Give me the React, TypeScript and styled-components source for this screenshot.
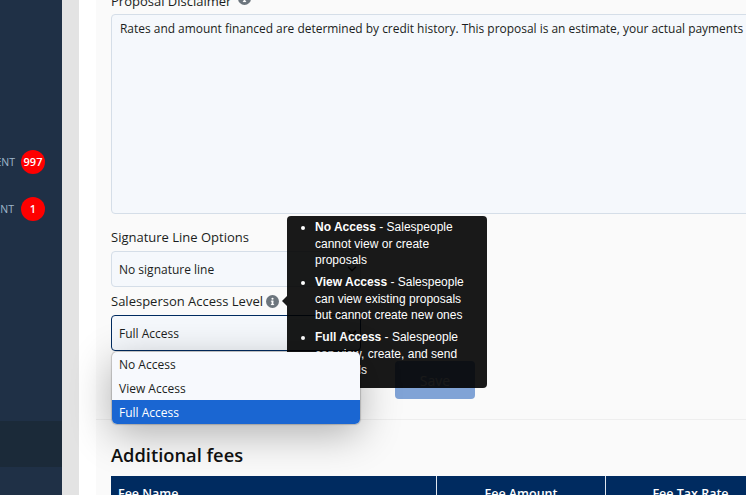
import styled, { createGlobalStyle } from "styled-components";
import { ChevronDown } from "lucide-react";

const GlobalStyle = createGlobalStyle`
  html, body {
    margin: 0;
    padding: 0;
    width: 746px;
    height: 495px;
    overflow: hidden;
    background: #fafafa;
  }
  * {
    box-sizing: border-box;
  }
`;

const InfoIcon = ({ size = 13 }: { size?: number }) => (
  <svg width={size} height={size} viewBox="0 0 16 16">
    <circle cx="8" cy="8" r="8" fill="#6c757d" />
    <rect x="6.9" y="7" width="2.2" height="5" fill="#fff" />
    <rect x="6" y="7" width="3" height="1.2" fill="#fff" />
    <rect x="6" y="11.2" width="4" height="1.2" fill="#fff" />
    <circle cx="8" cy="4.6" r="1.3" fill="#fff" />
  </svg>
);

const disclaimer =
  "Rates and amount financed are determined by credit history. This proposal is an estimate, your actual payments may vary.";

const App = () => {
  return (
    <Page>
      <GlobalStyle />
      <Sidebar>
        <NavRow>
          <NavText>ADJUSTMENT</NavText>
          <Badge>997</Badge>
        </NavRow>
        <NavRow $gap={7}>
          <NavText>PAYMENT</NavText>
          <Badge>1</Badge>
        </NavRow>
        <ActiveRow />
      </Sidebar>
      <Gutter />
      <WhiteStrip />
      <Content>
        <Form>
          <LabelRow>
            Proposal Disclaimer
            <DisclaimerIcon>
              <InfoIcon />
            </DisclaimerIcon>
          </LabelRow>
          <TextArea>{disclaimer}</TextArea>
          <SignatureLabel>Signature Line Options</SignatureLabel>
          <SelectBox>
            No signature line
            <Chevron>
              <ChevronDown size={14} strokeWidth={2.5} />
            </Chevron>
          </SelectBox>
          <AccessLabel>
            Salesperson Access Level
            <AccessIcon>
              <InfoIcon />
            </AccessIcon>
            <Tooltip>
              <TooltipArrow />
              <TooltipList>
                <TooltipItem>
                  <strong>No Access</strong> - Salespeople cannot view or create
                  proposals
                </TooltipItem>
                <TooltipItem>
                  <strong>View Access</strong> - Salespeople can view existing
                  proposals but cannot create new ones
                </TooltipItem>
                <TooltipItem>
                  <strong>Full Access</strong> - Salespeople can view, create,
                  and send proposals
                </TooltipItem>
              </TooltipList>
            </Tooltip>
          </AccessLabel>
          <SelectWrap>
            <SelectBox $focused>
              Full Access
              <Chevron>
                <ChevronDown size={14} strokeWidth={2.5} />
              </Chevron>
            </SelectBox>
            <Menu>
              <MenuItem>No Access</MenuItem>
              <MenuItem>View Access</MenuItem>
              <MenuItem $selected>Full Access</MenuItem>
            </Menu>
          </SelectWrap>
          <ButtonRow>
            <SaveButton>Save</SaveButton>
          </ButtonRow>
        </Form>
        <Divider />
        <FeesSection>
          <Heading>Additional fees</Heading>
          <FeeTable>
            <FeeHead>Fee Name</FeeHead>
            <FeeHead $center>Fee Amount</FeeHead>
            <FeeHead $center>Fee Tax Rate</FeeHead>
          </FeeTable>
        </FeesSection>
      </Content>
    </Page>
  );
};

export default App;

const Page = styled.div`
  display: flex;
  width: 746px;
  height: 495px;
  overflow: hidden;
  font-family: "Open Sans", "Noto Sans", sans-serif;
  color: #1b1e21;
`;

const Sidebar = styled.aside`
  flex: 0 0 62px;
  height: 495px;
  padding-top: 138px;
  background: #1f3046;
  overflow: hidden;
`;

const NavRow = styled.div<{ $gap?: number }>`
  display: flex;
  justify-content: flex-end;
  align-items: center;
  gap: ${({ $gap }) => $gap ?? 6}px;
  height: 47px;
  padding-right: 17px;
  white-space: nowrap;
`;

const NavText = styled.span`
  font-size: 10.5px;
  color: #9fb6cb;
`;

const Badge = styled.span`
  display: flex;
  flex: 0 0 24px;
  align-items: center;
  justify-content: center;
  width: 24px;
  height: 24px;
  border-radius: 50%;
  background: #fe0000;
  color: #fff;
  font-size: 11px;
  font-weight: 600;
`;

const ActiveRow = styled.div`
  height: 46px;
  margin-top: 189px;
  background: #1b2a39;
`;

const Gutter = styled.div`
  flex: 0 0 17px;
  background: #e3e3e3;
`;

const WhiteStrip = styled.div`
  flex: 0 0 17px;
  background: #ffffff;
`;

const Content = styled.main`
  flex: 1;
  min-width: 0;
  background: #fafafa;
`;

const Form = styled.div`
  margin-top: -10px;
  padding-left: 15px;
  width: 700px;
`;

const LabelRow = styled.div`
  display: flex;
  align-items: center;
  height: 22px;
  font-size: 13px;
`;

const DisclaimerIcon = styled.span`
  display: flex;
  margin-left: 7px;
  margin-top: -6px;
`;

const TextArea = styled.div`
  height: 200px;
  margin-top: 2px;
  padding: 5px 8px;
  border: 1px solid #d5dee8;
  border-radius: 4px;
  background: #f5f8fc;
  font-size: 11.95px;
  line-height: 18px;
  white-space: nowrap;
  overflow: hidden;
`;

const SignatureLabel = styled.div`
  display: flex;
  align-items: center;
  height: 22px;
  margin-top: 12px;
  font-size: 13px;
`;

const SelectBox = styled.div<{ $focused?: boolean }>`
  display: flex;
  align-items: center;
  justify-content: space-between;
  width: 250px;
  height: 36px;
  margin-top: 3px;
  padding: 0 1px 0 7px;
  border: 1px solid ${({ $focused }) => ($focused ? "#002b60" : "#d5dee8")};
  border-radius: 4px;
  background: #f5f8fc;
  font-size: 12px;
`;

const Chevron = styled.span`
  display: flex;
  color: #1a1a1a;
`;

const AccessLabel = styled.div`
  position: relative;
  display: flex;
  align-items: center;
  width: 250px;
  height: 22px;
  margin-top: 3px;
  font-size: 13px;
  white-space: nowrap;
`;

const AccessIcon = styled.span`
  display: flex;
  margin-left: 3px;
`;

const Tooltip = styled.div`
  position: absolute;
  left: 176px;
  top: -74px;
  z-index: 3;
  width: 200px;
  height: 172px;
  padding: 3px 12px 0 0;
  border-radius: 4px;
  background: rgba(0, 0, 0, 0.9);
  color: #fff;
  font-family: "Liberation Sans", Arial, sans-serif;
  font-size: 12px;
  line-height: 16.5px;
  white-space: normal;
`;

const TooltipArrow = styled.span`
  position: absolute;
  left: -5px;
  top: 80px;
  width: 0;
  height: 0;
  border-top: 5px solid transparent;
  border-bottom: 5px solid transparent;
  border-right: 5px solid rgba(0, 0, 0, 0.9);
`;

const TooltipList = styled.ul`
  margin: 0;
  padding: 0 0 0 28px;
`;

const TooltipItem = styled.li`
  margin-bottom: 5.5px;
`;

const SelectWrap = styled.div`
  position: relative;
  margin-top: 3px;
`;

const Menu = styled.div`
  position: absolute;
  left: 1px;
  top: 37px;
  z-index: 4;
  width: 248px;
  border-radius: 5px;
  overflow: hidden;
  background: #f7f9fd;
  box-shadow: 0 0 1px 1px rgba(0, 0, 0, 0.18), 0 10px 40px rgba(0, 0, 0, 0.3);
`;

const MenuItem = styled.div<{ $selected?: boolean }>`
  display: flex;
  align-items: center;
  height: 24px;
  padding-left: 7px;
  font-size: 12px;
  background: ${({ $selected }) => ($selected ? "#1a66d2" : "transparent")};
  color: ${({ $selected }) => ($selected ? "#fff" : "inherit")};
`;

const ButtonRow = styled.div`
  display: flex;
  padding-left: 284px;
  margin-top: 10px;
`;

const SaveButton = styled.button`
  width: 80px;
  height: 38px;
  border: 0;
  border-radius: 4px;
  background: #80a3d6;
  color: #fff;
  font-family: inherit;
  font-size: 14px;
`;

const Divider = styled.div`
  height: 1px;
  margin-top: 20px;
  background: #eeeeee;
`;

const FeesSection = styled.section`
  padding: 20px 0 0 15px;
`;

const Heading = styled.h2`
  margin: 0;
  height: 36px;
  font-size: 18.3px;
  font-weight: 600;
  line-height: 29px;
  color: #111;
`;

const FeeTable = styled.div`
  display: grid;
  grid-template-columns: 326px 169px 170px 1fr;
  height: 40px;
  width: 700px;
  background: #002b60;
`;

const FeeHead = styled.div<{ $center?: boolean }>`
  padding: 9px 7px 0;
  border-right: 1px solid #dfe6ef;
  text-align: ${({ $center }) => ($center ? "center" : "left")};
  color: #fff;
  font-size: 12.5px;
  font-weight: 600;
`;
